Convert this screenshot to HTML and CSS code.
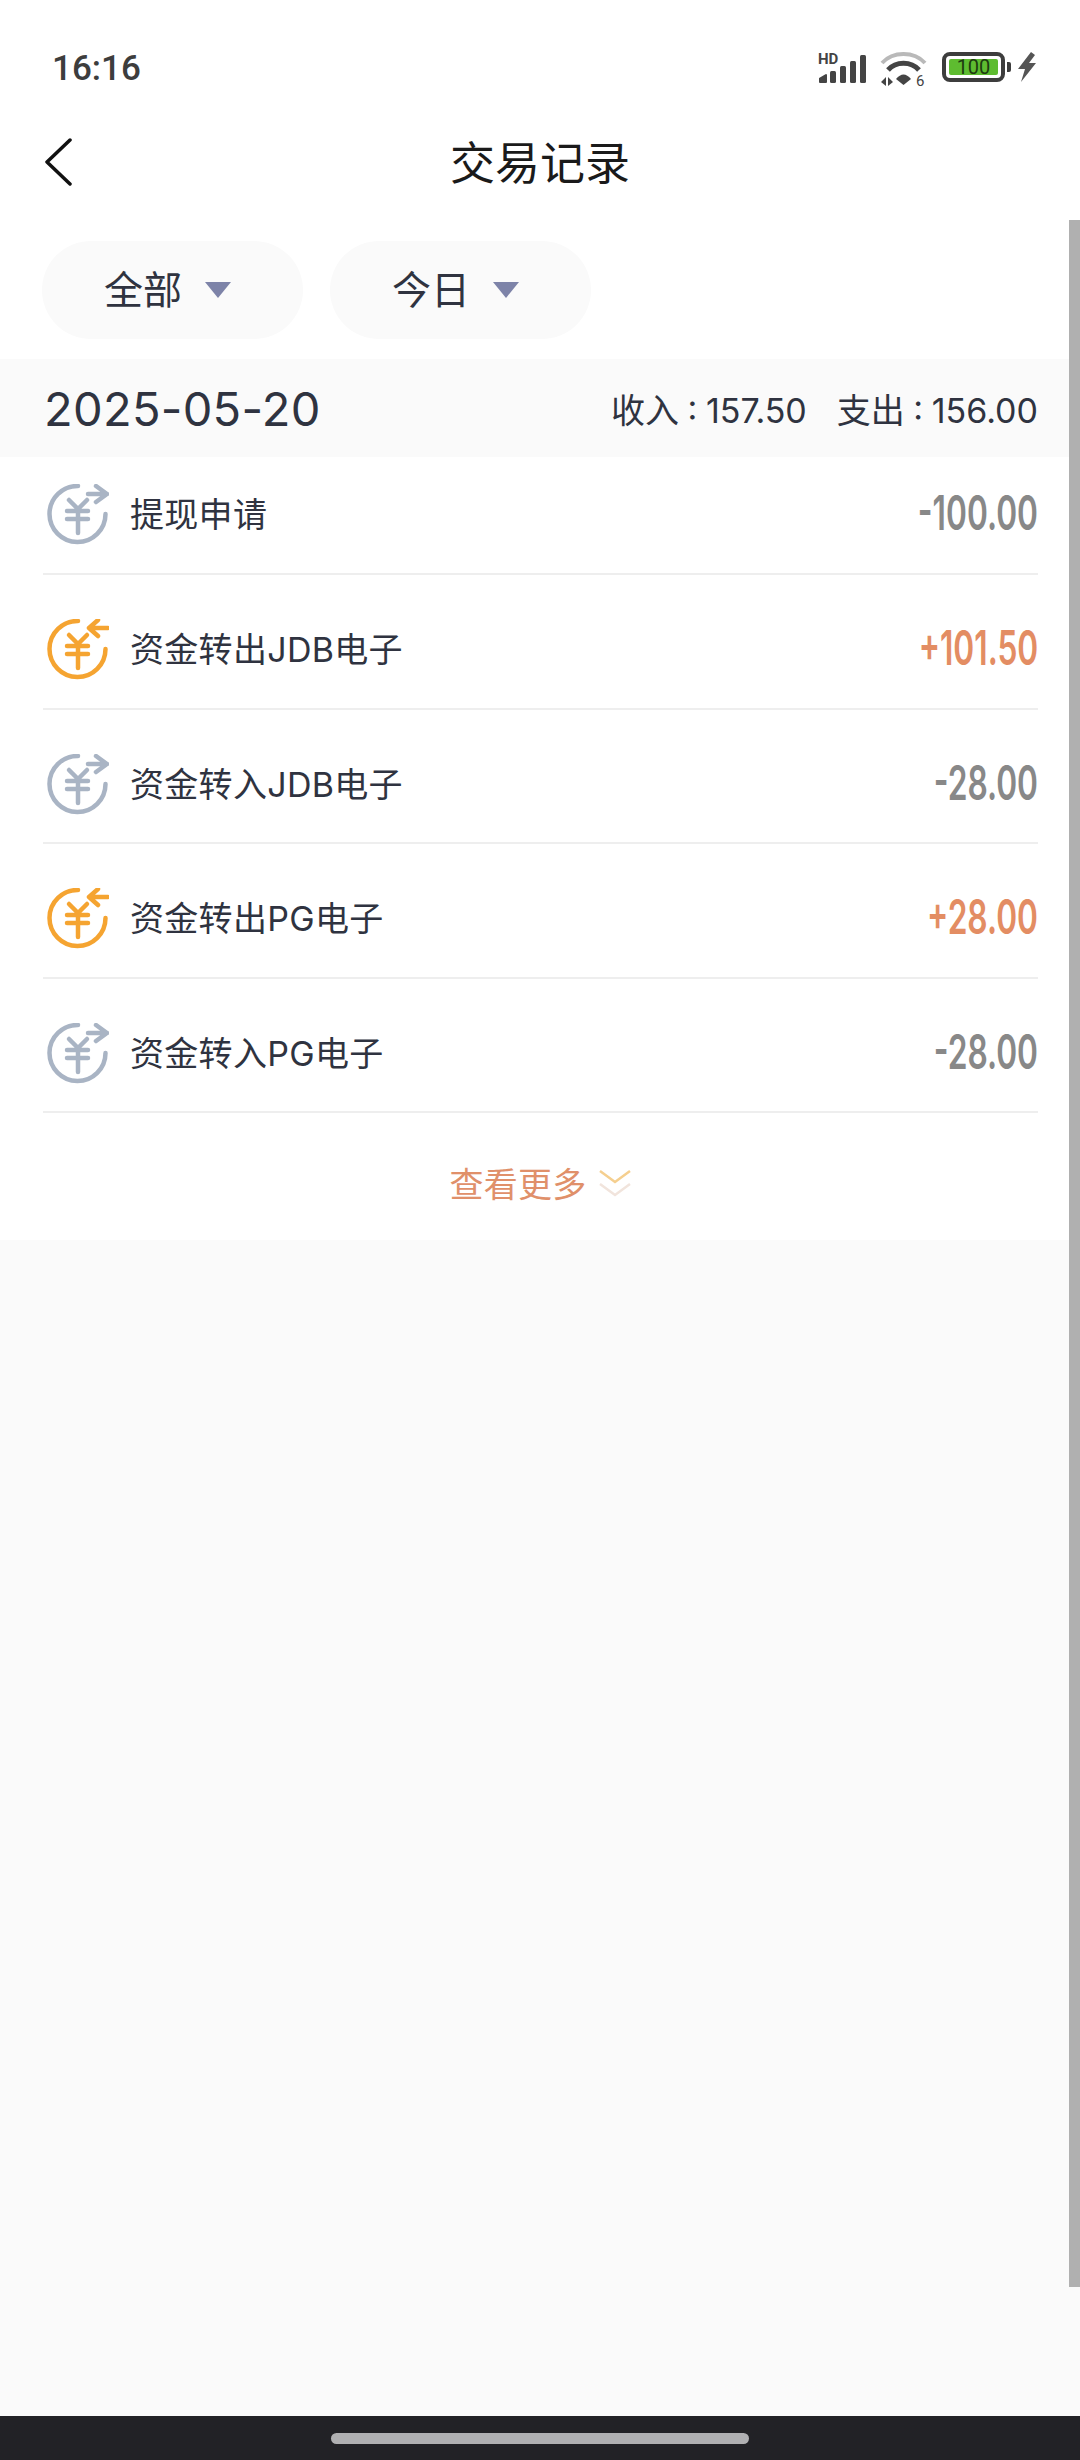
FILE: index.html
```html
<!DOCTYPE html>
<html lang="zh-CN">
  <head>
    <meta charset="UTF-8" />
    <meta name="viewport" content="width=device-width, initial-scale=1.0" />
    <title>交易记录</title>
    <link rel="stylesheet" href="styles.css">
  </head>
  <body>
    <div class="status-bar">
      <span class="time">16:16</span>
      <div class="status-icons">
        <svg class="signal" width="50" height="38" viewBox="0 -4 50 38">
          <text x="0" y="12" class="hd-text">HD</text>
          <path d="M2 30V26.5L8 23V30Z" fill="#444" stroke="#444" stroke-width="2" stroke-linejoin="round"/>
          <rect x="12" y="19" width="6" height="12" rx="1.5" fill="#444"/>
          <rect x="22" y="14" width="6" height="17" rx="1.5" fill="#444"/>
          <rect x="32" y="9" width="6" height="22" rx="1.5" fill="#444"/>
          <rect x="42" y="3" width="6" height="28" rx="1.5" fill="#444"/>
        </svg>
        <svg class="wifi" width="48" height="42" viewBox="0 -4 48 42">
          <path d="M2 11C13 -1 34 -1 45 11" fill="none" stroke="#b9b9b9" stroke-width="4"/>
          <path d="M8 18C16 9 31 9 39 18" fill="none" stroke="#444" stroke-width="5"/>
          <path d="M16 27C21 21 26 21 31 27L23.500 33Z" fill="#444"/>
          <path d="M1 30L6 25V34ZM8 25L13 30L8 34ZM15 25V34" fill="#444"/>
          <text x="36" y="34" class="wifi-text">6</text>
        </svg>
        <div class="battery">
          <div class="battery-body"><span class="battery-fill">100</span></div>
          <div class="battery-cap"></div>
        </div>
        <svg class="bolt" width="18" height="30" viewBox="0 0 18 30">
          <path d="M13 0L0 17H7L3 30L18 11H11L17 3Z" fill="#555"/>
        </svg>
      </div>
    </div>

    <div class="nav">
      <svg class="back" width="28" height="48" viewBox="0 0 28 48">
        <path d="M26 2L3 24L26 46" fill="none" stroke="#111" stroke-width="3.500" stroke-linecap="round" stroke-linejoin="round"/>
      </svg>
      <h1 class="title">交易记录</h1>
    </div>

    <div class="filters">
      <div class="pill"><span class="pill-text">全部</span><span class="caret"></span></div>
      <div class="pill"><span class="pill-text">今日</span><span class="caret"></span></div>
    </div>

    <div class="date-band">
      <span class="date">2025-05-20</span>
      <div class="summary">
        <span>收入 : 157.50</span>
        <span>支出 : 156.00</span>
      </div>
    </div>

    <div class="list">
      <div class="row">
        <svg class="icon out" width="62" height="62" viewBox="0 0 62 62">
          <path d="M31 2A28 28 0 1 0 58.500 30"/>
          <path d="M41 10H60M49 2L60 10L49 18"/>
          <path d="M22 16L31 25L40 16M20 27H41M20 35H41M31 26V49"/>
        </svg>
        <span class="row-name">提现申请</span>
        <span class="amount"><span class="amount-num">-100.00</span></span>
      </div>
      <div class="row">
        <svg class="icon in" width="62" height="62" viewBox="0 0 62 62">
          <path d="M31 2A28 28 0 1 0 58.500 30"/>
          <path d="M42 9H61M51 1L42 9L51 17"/>
          <path d="M22 16L31 25L40 16M20 27H41M20 35H41M31 26V49"/>
        </svg>
        <span class="row-name">资金转出JDB电子</span>
        <span class="amount plus"><span class="amount-num">+101.50</span></span>
      </div>
      <div class="row">
        <svg class="icon out" width="62" height="62" viewBox="0 0 62 62">
          <path d="M31 2A28 28 0 1 0 58.500 30"/>
          <path d="M41 10H60M49 2L60 10L49 18"/>
          <path d="M22 16L31 25L40 16M20 27H41M20 35H41M31 26V49"/>
        </svg>
        <span class="row-name">资金转入JDB电子</span>
        <span class="amount"><span class="amount-num">-28.00</span></span>
      </div>
      <div class="row">
        <svg class="icon in" width="62" height="62" viewBox="0 0 62 62">
          <path d="M31 2A28 28 0 1 0 58.500 30"/>
          <path d="M42 9H61M51 1L42 9L51 17"/>
          <path d="M22 16L31 25L40 16M20 27H41M20 35H41M31 26V49"/>
        </svg>
        <span class="row-name">资金转出PG电子</span>
        <span class="amount plus"><span class="amount-num">+28.00</span></span>
      </div>
      <div class="row">
        <svg class="icon out" width="62" height="62" viewBox="0 0 62 62">
          <path d="M31 2A28 28 0 1 0 58.500 30"/>
          <path d="M41 10H60M49 2L60 10L49 18"/>
          <path d="M22 16L31 25L40 16M20 27H41M20 35H41M31 26V49"/>
        </svg>
        <span class="row-name">资金转入PG电子</span>
        <span class="amount"><span class="amount-num">-28.00</span></span>
      </div>
    </div>

    <div class="more">
      <span>查看更多</span>
      <svg width="32" height="28" viewBox="0 0 32 28">
        <path d="M1 2L16 13L31 2" fill="none" stroke="#f5cf8f" stroke-width="2.500"/>
        <path d="M1 15L16 26L31 15" fill="none" stroke="#f1e4dc" stroke-width="2.500"/>
      </svg>
    </div>

    <div class="empty"></div>

    <div class="home-bar"><div class="home-pill"></div></div>

    <div class="scrollbar"></div>
  </body>
</html>
```

FILE: styles.css
```css
* {
  box-sizing: border-box;
}

body {
  margin: 0;
  height: 2460px;
  display: flex;
  flex-direction: column;
  position: relative;
  overflow: hidden;
  background-color: white;
  color: #2f3340;
  font-family: Inter, "Noto Sans CJK SC", sans-serif;
}

.status-bar {
  height: 113px;
  padding: 50px 44px 0 52px;
  display: flex;
  justify-content: space-between;
  align-items: flex-start;
}

.time {
  font-family: Roboto, sans-serif;
  font-size: 35px;
  font-weight: 500;
  line-height: 38px;
  color: #3d3d3d;
}

.status-icons {
  display: flex;
  align-items: flex-start;
  margin-top: 2px;
}

.signal {
  margin-top: -4px;
}

.hd-text {
  font-family: Roboto, sans-serif;
  font-size: 15px;
  font-weight: 700;
  fill: #444;
}

.wifi {
  margin-left: 12px;
  margin-top: -4px;
}

.wifi-text {
  font-family: Roboto, sans-serif;
  font-size: 15px;
  fill: #444;
}

.battery {
  display: flex;
  align-items: center;
  margin-left: 14px;
}

.battery-body {
  width: 63px;
  height: 30px;
  padding: 3px;
  border: 4px solid #3d3d3d;
  border-radius: 8px;
}

.battery-fill {
  display: block;
  height: 100%;
  background-color: #5ebc30;
  border-radius: 2px;
  color: #1d3b10;
  font-family: Roboto, sans-serif;
  font-size: 20px;
  line-height: 17px;
  text-align: center;
}

.battery-cap {
  width: 4px;
  height: 10px;
  margin-left: 2px;
  background-color: #3d3d3d;
  border-radius: 0 2px 2px 0;
}

.bolt {
  margin-left: 7px;
}

.nav {
  height: 98px;
  padding-left: 44px;
  display: flex;
  align-items: center;
  position: relative;
}

.title {
  position: absolute;
  left: 0;
  right: 0;
  margin: 0;
  padding-bottom: 4px;
  text-align: center;
  font-size: 45px;
  font-weight: 400;
  color: #1a1a1a;
}

.filters {
  display: flex;
  gap: 27px;
  padding: 30px 0 20px 42px;
}

.pill {
  height: 98px;
  width: 261px;
  display: flex;
  align-items: center;
  padding-left: 62px;
  border-radius: 49px;
  background-color: #fafafa;
  font-size: 39px;
}

.pill-text {
  padding-bottom: 6px;
}

.caret {
  margin-left: 23px;
  border-left: 13px solid transparent;
  border-right: 13px solid transparent;
  border-top: 16px solid #7d83a8;
}

.date-band {
  height: 98px;
  padding: 0 42px 0 44px;
  display: flex;
  justify-content: space-between;
  align-items: center;
  background-color: #fafafa;
}

.date {
  font-size: 47px;
  letter-spacing: 0.3px;
}

.summary {
  display: flex;
  gap: 30px;
  font-size: 34px;
  word-spacing: -1px;
}

.list {
  padding: 0 42px 0 43px;
}

.row {
  height: 134.5px;
  padding-top: 18px;
  display: flex;
  align-items: center;
  border-bottom: 2px solid #eeeeee;
}

.row:first-child {
  height: 118px;
  padding-top: 0;
}

.icon {
  margin-left: 4px;
  fill: none;
  stroke-width: 4.500;
  stroke-linecap: round;
  stroke-linejoin: round;
}

.icon.out {
  stroke: #a9b4c4;
}

.icon.in {
  stroke: #f5a431;
}

.row-name {
  flex: 1;
  margin-left: 21px;
  padding-bottom: 5px;
  font-size: 34px;
  letter-spacing: 0.3px;
}

.amount {
  padding-bottom: 5px;
  color: #888888;
}

.amount.plus {
  color: #e38d63;
}

.amount-num {
  display: inline-block;
  font-size: 48px;
  font-weight: 600;
  transform: scaleX(0.66);
  transform-origin: right center;
}

.more {
  height: 127px;
  padding-top: 12px;
  display: flex;
  justify-content: center;
  align-items: center;
  gap: 12px;
  font-size: 34px;
  letter-spacing: 0.3px;
  color: #e0906a;
}

.empty {
  flex: 1;
  background-color: #fafafa;
}

.home-bar {
  height: 44px;
  padding-top: 17px;
  background-color: #222226;
}

.home-pill {
  width: 418px;
  height: 11px;
  margin-left: 331px;
  border-radius: 6px;
  background-color: #b0b0b2;
}

.scrollbar {
  position: absolute;
  top: 220px;
  right: 0;
  width: 11px;
  height: 2067px;
  background-color: #b0b0b0;
}
```
